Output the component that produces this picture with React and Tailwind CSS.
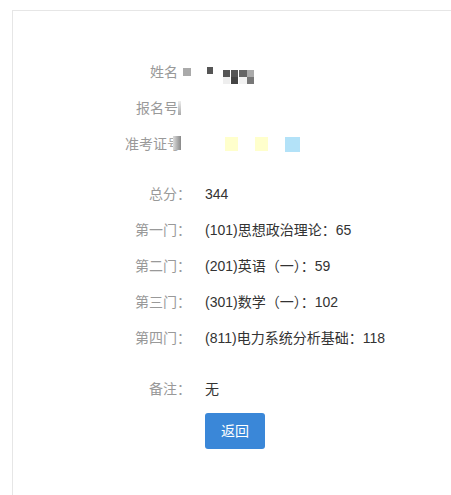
import React from "react"

const font = { fontFamily: '"Liberation Sans", "Noto Sans CJK SC", sans-serif' }

function Row({ label, children, tail, pr = "" }) {
  return (
    <div className="flex h-[36px] items-center text-[14px]">
      <div className={`w-[178px] flex justify-end items-center text-[#999] ${pr}`}>
        {label}
        {tail}
      </div>
      <div className="pl-[14px] text-[#333] flex items-center">{children}</div>
    </div>
  )
}

export default function App() {
  const scores = [
    ["第一门：", "(101)思想政治理论：65"],
    ["第二门：", "(201)英语（一）：59"],
    ["第三门：", "(301)数学（一）：102"],
    ["第四门：", "(811)电力系统分析基础：118"],
  ]

  return (
    <div className="bg-white w-[451px] h-[495px] pt-[10px] pl-[12px] overflow-hidden" style={font}>
      <div className="border-t border-l border-[#e6e6e6] h-[500px] pt-[43px]">

        {/* PERSONAL INFO */}
        <Row label="姓名" tail={<span className="ml-[5px] w-[8px] h-[8px] bg-[#aaa] inline-block" />}>
          <div className="flex items-start mt-[9px]">
            <span className="w-[6px] h-[7px] bg-[#555] ml-[2px] mt-[-3px]" />
            <div className="ml-[10px] grid grid-cols-4">
              <span className="w-[7px] h-[7px] bg-[#555]" />
              <span className="w-[7px] h-[7px] bg-[#555]" />
              <span className="w-[8px] h-[7px] bg-[#666]" />
              <span className="w-[7px] h-[7px] bg-[#aaa]" />
              <span className="w-[7px] h-[7px] bg-[#eee]" />
              <span className="w-[7px] h-[7px] bg-[#444]" />
              <span className="w-[8px] h-[7px] bg-[#f2f2f2]" />
              <span className="w-[7px] h-[7px] bg-[#777]" />
            </div>
          </div>
        </Row>
        <Row label="报名号" pr="pr-[10px]" tail={<span className="w-[3px] h-[14px] bg-gradient-to-b from-[#eee] to-[#aaa] inline-block" />} />
        <Row label="准考证" pr="pr-[10px]" tail={<span className="relative text-[#aaa]">号<span className="absolute right-0 top-[2px] w-[8px] h-[14px] bg-gradient-to-r from-[#ddd] to-[#888]" /></span>}>
          <div className="flex items-center ml-[20px]">
            <span className="w-[13px] h-[14px] bg-[#ffffcc]" />
            <span className="w-[13px] h-[14px] bg-[#ffffcc] ml-[17px]" />
            <span className="w-[15px] h-[15px] bg-[#b3e2f8] ml-[17px]" />
          </div>
        </Row>

        {/* SCORES */}
        <div className="mt-[14px]">
          <Row label="总分：">344</Row>
          {scores.map(([l, v]) => (
            <Row key={l} label={l}>{v}</Row>
          ))}
        </div>

        {/* NOTE */}
        <div className="mt-[15px]">
          <Row label="备注：">无</Row>
        </div>

        <div className="pl-[192px] mt-[6px]">
          <button className="w-[60px] h-[36px] bg-[#3a87d8] text-white text-[14px] rounded-[3px]">
            返回
          </button>
        </div>

      </div>
    </div>
  )
}
